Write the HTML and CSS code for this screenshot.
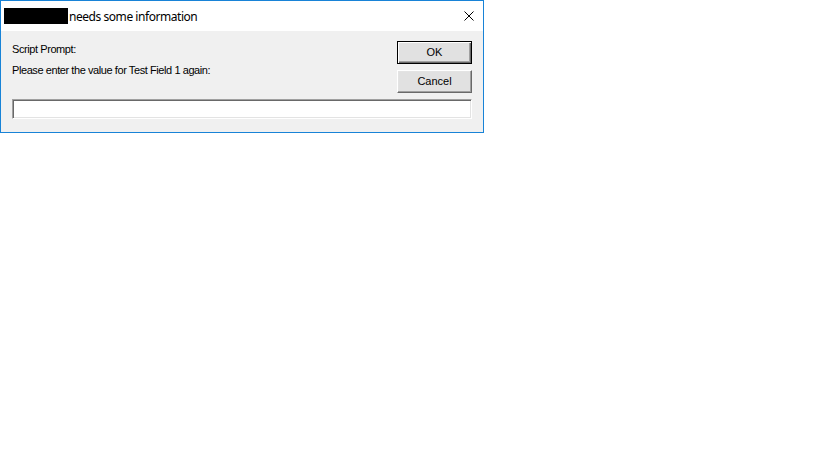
FILE: index.html
```html
<!DOCTYPE html>
<html>
<head>
<meta charset="utf-8">
<link rel="stylesheet" href="styles.css">
</head>
<body>
<div class="dialog">
  <div class="titlebar">
    <span class="redact"></span>
    <span class="title">needs some information</span>
    <svg class="close" width="10" height="10" viewBox="0 0 10 10"><path d="M0.5 0.5 L9.5 9.5 M9.5 0.5 L0.5 9.5" stroke="#000" stroke-width="1" fill="none"/></svg>
  </div>
  <div class="content">
    <div class="labels">
      <div class="label first">Script Prompt:</div>
      <div class="label">Please enter the value for Test Field 1 again:</div>
    </div>
    <div class="buttons">
      <button class="btn default">OK</button>
      <button class="btn">Cancel</button>
    </div>
    <div class="field"></div>
  </div>
</div>
</body>
</html>
```
FILE: styles.css
```css
html, body { margin: 0; padding: 0; background: #fff; }
.dialog {
  width: 482px;
  border: 1px solid #1883d7;
  font-family: "Liberation Sans", Arial, sans-serif;
}
.titlebar {
  height: 30px;
  background: #fff;
  display: flex;
  align-items: center;
  padding: 0 9px 0 3px;
}
.redact {
  width: 64px;
  height: 16px;
  background: #000;
  margin-top: -1px;
}
.title {
  font-family: "Noto Sans", "Open Sans", sans-serif;
  font-size: 12px;
  letter-spacing: -0.45px;
  color: #000;
  margin-left: 1px;
  flex: 1;
}
.close { display: block; }
.content {
  background: #f0f0f0;
  height: 101px;
  box-sizing: border-box;
  padding: 10px 11px 0 11px;
  display: grid;
  grid-template-columns: 1fr 75px;
  grid-template-rows: 52px 20px;
  row-gap: 6px;
}
.labels { padding-top: 1px; }
.label {
  font-size: 11px;
  line-height: 14px;
  color: #000;
  letter-spacing: -0.42px;
}
.label.first { margin-bottom: 7px; }
.buttons {
  display: flex;
  flex-direction: column;
  gap: 6px;
}
.btn {
  width: 75px;
  height: 23px;
  margin: 0;
  padding: 0 0 1px 0;
  background: #e1e1e1;
  border: 1px solid;
  border-color: #fff #696969 #696969 #fff;
  box-shadow: inset -1px -1px 0 #a0a0a0, inset 1px 1px 0 #e3e3e3;
  font-family: "Liberation Sans", Arial, sans-serif;
  font-size: 11px;
  color: #000;
}
.btn.default {
  border: 1px solid #000;
  box-shadow: inset 1px 1px 0 #fff, inset -1px -1px 0 #696969, inset -2px -2px 0 #a0a0a0;
}
.field {
  grid-column: 1 / 3;
  background: #fff;
  border: 1px solid;
  border-color: #a0a0a0 #fff #fff #a0a0a0;
  box-shadow: inset 1px 1px 0 #696969, inset -1px -1px 0 #e3e3e3;
}
```
